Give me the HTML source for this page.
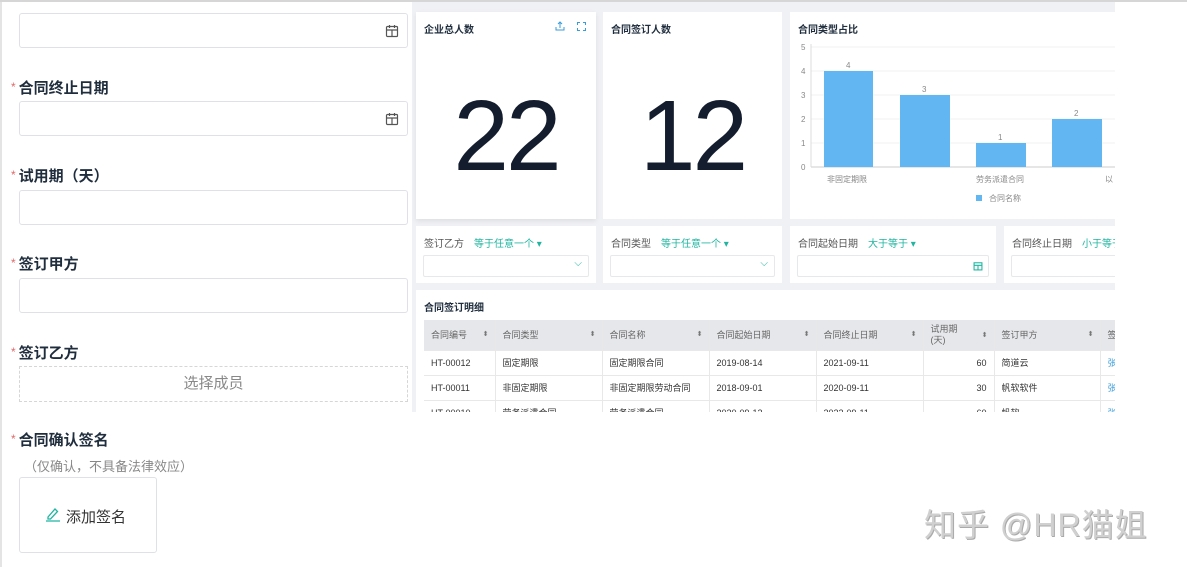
<!DOCTYPE html><html><head><meta charset="utf-8"><style>
*{box-sizing:border-box;margin:0;padding:0}
body{width:1187px;height:567px;overflow:hidden;background:#fff;font-family:"Liberation Sans","Noto Sans CJK SC",sans-serif;position:relative}
.a{position:absolute}
.inp{position:absolute;left:19px;width:389px;height:35px;border:1px solid #dfe1e6;border-radius:3px;background:#fff}
.lbl{position:absolute;left:11px;font-size:15px;font-weight:bold;color:#1f2d3d}
.lbl i{color:#e06a6a;font-style:normal;font-weight:normal;font-size:12px;vertical-align:2px;margin-right:3px}
.card{position:absolute;background:#fff}
.ct{position:absolute;left:8px;top:9px;font-size:10px;font-weight:bold;color:#1f2d3d}
.big{position:absolute;top:74px;width:100%;text-align:center;font-size:100px;color:#141d2e;font-family:"Liberation Sans",sans-serif;line-height:1;letter-spacing:-3px}
.fl{position:absolute;top:9px;left:8px;font-size:10px;color:#555}
.fl b{font-weight:normal;color:#1fb5a0;margin-left:10px}
.fi{position:absolute;left:7px;right:7px;top:29px;height:22px;border:1px solid #e6e8ec;border-radius:2px}
table{border-collapse:collapse;font-size:9px;color:#333}
td,th{height:25px;padding:0 7px;text-align:left;font-weight:normal;white-space:nowrap;border-bottom:1px solid #e8e8e8;border-right:1px solid #e8e8e8;position:relative}
th{background:#e6e7ea;color:#666;height:30px}
th s{position:absolute;right:6px;top:10px;text-decoration:none;font-size:7px;color:#777}
</style></head><body>
<div class="a" style="left:0;top:0;width:1187px;height:2px;background:#d6d6d6"></div>
<div class="a" style="left:0;top:2px;width:2px;height:565px;background:#e4e4e4"></div>
<div class="inp" style="top:13px"></div>
<svg class="a" style="left:385px;top:24px" width="14" height="14" viewBox="0 0 14 14" fill="none" stroke="#555" stroke-width="1.2"><rect x="1.5" y="2.5" width="11" height="10" rx="1"/><path d="M1.5 6h11M4.5 1v3M9.5 1v3M7 6v6.5"/></svg>
<div class="lbl" style="top:77px"><i>*</i>合同终止日期</div>
<div class="inp" style="top:101px"></div>
<svg class="a" style="left:385px;top:112px" width="14" height="14" viewBox="0 0 14 14" fill="none" stroke="#555" stroke-width="1.2"><rect x="1.5" y="2.5" width="11" height="10" rx="1"/><path d="M1.5 6h11M4.5 1v3M9.5 1v3M7 6v6.5"/></svg>
<div class="lbl" style="top:165px"><i>*</i>试用期（天）</div>
<div class="inp" style="top:190px"></div>
<div class="lbl" style="top:253px"><i>*</i>签订甲方</div>
<div class="inp" style="top:278px"></div>
<div class="lbl" style="top:342px"><i>*</i>签订乙方</div>
<div class="a" style="left:19px;top:366px;width:389px;height:36px;border:1px dashed #d6d6d6;text-align:center;line-height:34px;font-size:15px;color:#888">选择成员</div>
<div class="lbl" style="top:429px"><i>*</i>合同确认签名</div>
<div class="a" style="left:24px;top:456px;font-size:13px;color:#888">（仅确认，不具备法律效应）</div>
<div class="a" style="left:19px;top:477px;width:138px;height:76px;border:1px solid #dfe1e6;border-radius:3px"></div>
<svg class="a" style="left:45px;top:506px" width="16" height="16" viewBox="0 0 16 16" fill="none" stroke="#1fb5a0" stroke-width="1.3"><path d="M3 11L10 3l2.5 2.5L5.5 13H3z M1 15h14"/></svg>
<div class="a" style="left:66px;top:506px;font-size:15px;color:#333">添加签名</div>
<div class="a" style="left:412px;top:2px;width:703px;height:410px;background:#f0f1f5"></div>
<div class="card" style="left:416px;top:12px;width:180px;height:207px;box-shadow:0 2px 5px rgba(0,0,0,.08)"><div class="ct">企业总人数</div>
<svg class="a" style="left:139px;top:9px" width="10" height="10" viewBox="0 0 10 10" fill="none" stroke="#3a9bd9" stroke-width="1"><path d="M5 7V1M3 3l2-2 2 2M1 6v3h8V6"/></svg>
<svg class="a" style="left:161px;top:10px" width="9" height="9" viewBox="0 0 9 9" fill="none" stroke="#3a9bd9" stroke-width="1"><path d="M0.5 3V.5H3M6 .5h2.5V3M8.5 6v2.5H6M3 8.5H.5V6"/></svg>
<div class="big">22</div></div>
<div class="card" style="left:603px;top:12px;width:179px;height:207px"><div class="ct">合同签订人数</div><div class="big">12</div></div>
<div class="card" style="left:790px;top:12px;width:325px;height:207px"><div class="ct">合同类型占比</div>
<svg class="a" style="left:0;top:0" width="325" height="207" font-size="8" fill="#888" font-family="Liberation Sans,Noto Sans CJK SC,sans-serif">
<g stroke="#f0f0f0"><line x1="21" y1="35" x2="325" y2="35"/><line x1="21" y1="59" x2="325" y2="59"/><line x1="21" y1="83" x2="325" y2="83"/><line x1="21" y1="107" x2="325" y2="107"/><line x1="21" y1="131" x2="325" y2="131"/></g>
<line x1="21" y1="155" x2="325" y2="155" stroke="#ccc"/><line x1="21" y1="32" x2="21" y2="155" stroke="#ddd"/>
<text x="11" y="38">5</text><text x="11" y="62">4</text><text x="11" y="86">3</text><text x="11" y="110">2</text><text x="11" y="134">1</text><text x="11" y="158">0</text>
<g fill="#62b6f2"><rect x="34" y="59" width="49" height="96"/><rect x="110" y="83" width="50" height="72"/><rect x="186" y="131" width="50" height="24"/><rect x="262" y="107" width="50" height="48"/></g>
<text x="56" y="56">4</text><text x="132" y="80">3</text><text x="208" y="128">1</text><text x="284" y="104">2</text>
<text x="37" y="170">非固定期限</text><text x="186" y="170">劳务派遣合同</text><text x="315" y="170">以</text>
<rect x="186" y="183" width="6" height="6" fill="#62b6f2"/><text x="199" y="189">合同名称</text></svg></div>
<div class="card" style="left:416px;top:226px;width:180px;height:57px"><div class="fl">签订乙方<b>等于任意一个 ▾</b></div><div class="fi"></div><div class="a" style="right:14px;top:32px;font-size:10px;color:#1fb5a0">⌵</div></div>
<div class="card" style="left:603px;top:226px;width:179px;height:57px"><div class="fl">合同类型<b>等于任意一个 ▾</b></div><div class="fi"></div><div class="a" style="right:14px;top:32px;font-size:10px;color:#1fb5a0">⌵</div></div>
<div class="card" style="left:790px;top:226px;width:206px;height:57px"><div class="fl">合同起始日期<b>大于等于 ▾</b></div><div class="fi"></div>
<svg class="a" style="left:183px;top:35px" width="10" height="10" viewBox="0 0 14 14" fill="none" stroke="#1fb5a0" stroke-width="1.5"><rect x="1.5" y="2.5" width="11" height="10"/><path d="M1.5 6h11M7 6v6.5"/></svg></div>
<div class="card" style="left:1004px;top:226px;width:111px;height:57px;overflow:hidden"><div class="fl" style="white-space:nowrap">合同终止日期<b>小于等于</b></div><div class="fi" style="right:-10px"></div></div>
<div class="card" style="left:416px;top:290px;width:699px;height:122px;overflow:hidden"><div class="ct">合同签订明细</div>
<table class="a" style="left:8px;top:30px;width:720px">
<tr><th style="width:71px">合同编号<s>⬍</s></th><th style="width:107px">合同类型<s>⬍</s></th><th style="width:107px">合同名称<s>⬍</s></th><th style="width:107px">合同起始日期<s>⬍</s></th><th style="width:107px">合同终止日期<s>⬍</s></th><th style="width:71px;line-height:11px">试用期<br>(天)<s>⬍</s></th><th style="width:106px">签订甲方<s>⬍</s></th><th>签</th></tr>
<tr><td>HT-00012</td><td>固定期限</td><td>固定期限合同</td><td>2019-08-14</td><td>2021-09-11</td><td style="text-align:right">60</td><td>简道云</td><td style="color:#3a9bd9">张</td></tr>
<tr><td>HT-00011</td><td>非固定期限</td><td>非固定期限劳动合同</td><td>2018-09-01</td><td>2020-09-11</td><td style="text-align:right">30</td><td>帆软软件</td><td style="color:#3a9bd9">张</td></tr>
<tr><td>HT-00010</td><td>劳务派遣合同</td><td>劳务派遣合同</td><td>2020-09-12</td><td>2022-09-11</td><td style="text-align:right">60</td><td>帆软</td><td style="color:#3a9bd9">张</td></tr>
</table></div>
<div class="a" style="left:924px;top:500px;font-size:32px;color:#d0d0d0;letter-spacing:1px;text-shadow:1px 1px 0 #aaa">知乎 @HR猫姐</div>
</body></html>
